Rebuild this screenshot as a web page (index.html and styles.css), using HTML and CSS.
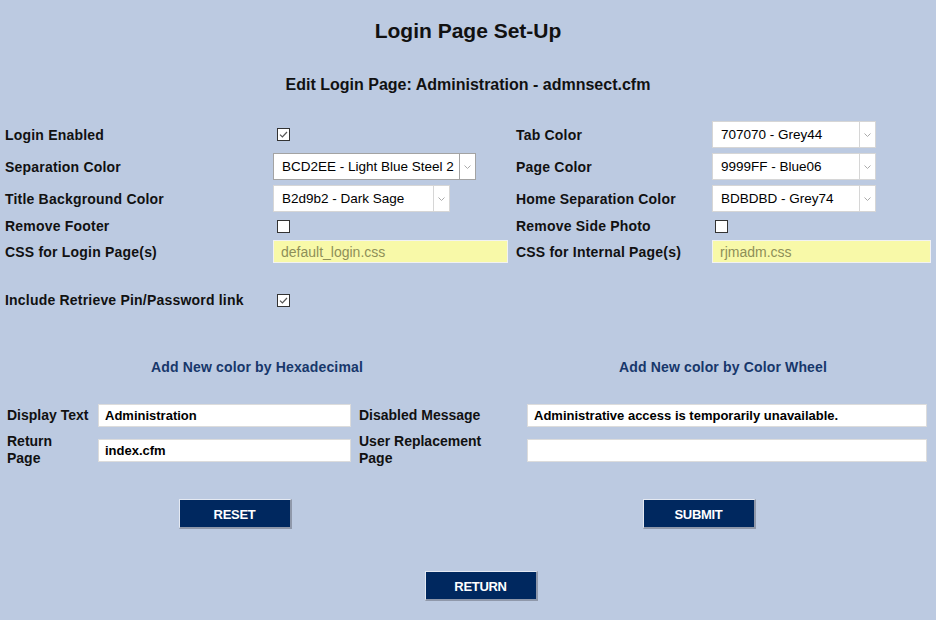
FILE: index.html
```html
<!DOCTYPE html>
<html lang="en">
<head>
<meta charset="utf-8">
<title>Login Page Set-Up</title>
<link rel="stylesheet" href="styles.css">
</head>
<body>
<header class="head">
  <h1 class="title">Login Page Set-Up</h1>
  <h2 class="subtitle">Edit Login Page: Administration - admnsect.cfm</h2>
</header>

<section class="settings">
  <span class="lbl">Login Enabled</span>
  <span class="cb"><svg viewBox="0 0 13 13" width="13" height="13"><rect x="0.5" y="0.5" width="12" height="12" fill="#fff" stroke="#333"/><path d="M3 6.6 L5.4 9 L10 4" fill="none" stroke="#555" stroke-width="1.2"/></svg></span>
  <span class="lbl">Tab Color</span>
  <div class="sel sel-r"><span class="sel-text">707070 - Grey44</span><span class="sel-arrow"><svg viewBox="0 0 7 4" width="7" height="4"><path d="M0.5 0.5 L3.5 3.5 L6.5 0.5" fill="none" stroke="#aaa" stroke-width="1"/></svg></span></div>

  <span class="lbl">Separation Color</span>
  <div class="sel sel-wide sel-focus"><span class="sel-text">BCD2EE - Light Blue Steel 2</span><span class="sel-arrow"><svg viewBox="0 0 7 4" width="7" height="4"><path d="M0.5 0.5 L3.5 3.5 L6.5 0.5" fill="none" stroke="#aaa" stroke-width="1"/></svg></span></div>
  <span class="lbl">Page Color</span>
  <div class="sel sel-r"><span class="sel-text">9999FF - Blue06</span><span class="sel-arrow"><svg viewBox="0 0 7 4" width="7" height="4"><path d="M0.5 0.5 L3.5 3.5 L6.5 0.5" fill="none" stroke="#aaa" stroke-width="1"/></svg></span></div>

  <span class="lbl">Title Background Color</span>
  <div class="sel sel-mid"><span class="sel-text">B2d9b2 - Dark Sage</span><span class="sel-arrow"><svg viewBox="0 0 7 4" width="7" height="4"><path d="M0.5 0.5 L3.5 3.5 L6.5 0.5" fill="none" stroke="#aaa" stroke-width="1"/></svg></span></div>
  <span class="lbl">Home Separation Color</span>
  <div class="sel sel-r"><span class="sel-text">BDBDBD - Grey74</span><span class="sel-arrow"><svg viewBox="0 0 7 4" width="7" height="4"><path d="M0.5 0.5 L3.5 3.5 L6.5 0.5" fill="none" stroke="#aaa" stroke-width="1"/></svg></span></div>

  <span class="lbl">Remove Footer</span>
  <span class="cb"><svg viewBox="0 0 13 13" width="13" height="13"><rect x="0.5" y="0.5" width="12" height="12" fill="#fff" stroke="#333"/></svg></span>
  <span class="lbl">Remove Side Photo</span>
  <span class="cb cb-r"><svg viewBox="0 0 13 13" width="13" height="13"><rect x="0.5" y="0.5" width="12" height="12" fill="#fff" stroke="#333"/></svg></span>

  <span class="lbl">CSS for Login Page(s)</span>
  <input class="css-input" type="text" value="default_login.css" readonly>
  <span class="lbl">CSS for Internal Page(s)</span>
  <input class="css-input css-input-r" type="text" value="rjmadm.css" readonly>

  <span class="lbl r7">Include Retrieve Pin/Password link</span>
  <span class="cb r7"><svg viewBox="0 0 13 13" width="13" height="13"><rect x="0.5" y="0.5" width="12" height="12" fill="#fff" stroke="#333"/><path d="M3 6.6 L5.4 9 L10 4" fill="none" stroke="#555" stroke-width="1.2"/></svg></span>
</section>

<section class="addrow">
  <span class="addlink">Add New color by Hexadecimal</span>
  <span class="addlink">Add New color by Color Wheel</span>
</section>

<section class="form">
  <span class="flbl">Display Text</span>
  <input class="field" type="text" value="Administration">
  <span class="flbl flbl2">Disabled Message</span>
  <input class="field" type="text" value="Administrative access is temporarily unavailable.">

  <span class="flbl">Return<br>Page</span>
  <input class="field" type="text" value="index.cfm">
  <span class="flbl flbl2">User Replacement<br>Page</span>
  <input class="field" type="text" value="">
</section>

<section class="btnrow">
  <button class="btn" type="button">RESET</button>
  <button class="btn" type="button">SUBMIT</button>
</section>

<section class="retrow">
  <button class="btn" type="button">RETURN</button>
</section>
</body>
</html>
```

FILE: styles.css
```css
body {
  margin: 0;
  background: #bccae1;
  font-family: "Liberation Sans", Arial, sans-serif;
  color: #111;
}

.head {
  text-align: center;
  padding-top: 19px;
}

.title {
  margin: 0;
  font-size: 21px;
  line-height: 24px;
  font-weight: bold;
}

.subtitle {
  margin: 32px 0 0;
  font-size: 16px;
  line-height: 20px;
  font-weight: bold;
}

.settings {
  display: grid;
  grid-template-columns: 268px 243px 196px 219px;
  grid-template-rows: 27px 27px 27px 18px 23px 17px 20px;
  row-gap: 5px;
  padding-left: 5px;
  margin-top: 26px;
  align-items: center;
}

.lbl {
  font-size: 14px;
  font-weight: bold;
  letter-spacing: 0.2px;
  white-space: nowrap;
}

.r7 {
  grid-row: 7;
}

.cb {
  display: flex;
  margin-left: 4px;
}

.cb-r {
  margin-left: 3px;
}

.sel {
  display: flex;
  align-items: center;
  height: 27px;
  box-sizing: border-box;
  border: 1px solid #d6d6d6;
  background: #fff;
  font-size: 13.5px;
  color: #000;
}

.sel-r {
  width: 164px;
}

.sel-wide {
  width: 203px;
}

.sel-mid {
  width: 177px;
}

.sel-focus {
  border-color: #a3a3a3;
}

.sel-text {
  flex: 1;
  padding-left: 8px;
  white-space: nowrap;
  overflow: hidden;
}

.sel-arrow {
  width: 15px;
  align-self: stretch;
  border-left: 1px solid #d6d6d6;
  display: flex;
  align-items: center;
  justify-content: center;
}

.sel-focus .sel-arrow {
  border-left-color: #a3a3a3;
}

.css-input {
  width: 235px;
  height: 23px;
  box-sizing: border-box;
  margin: 0;
  border: 1px solid #f2f2f2;
  background: #f8f9a8;
  color: #8e8f58;
  font-family: "Liberation Sans", Arial, sans-serif;
  font-size: 14px;
  padding: 0 0 0 7px;
  outline: none;
}

.css-input-r {
  width: 219px;
}

.addrow {
  display: grid;
  grid-template-columns: 514px 418px;
  margin-top: 48px;
  line-height: 18px;
}

.addlink {
  text-align: center;
  font-size: 14px;
  font-weight: bold;
  letter-spacing: 0.15px;
  color: #17376b;
}

.form {
  display: grid;
  grid-template-columns: 91px 253px 176px 400px;
  row-gap: 6px;
  padding-left: 7px;
  margin-top: 28px;
  align-items: center;
}

.flbl {
  font-size: 14px;
  font-weight: bold;
  line-height: 17px;
  white-space: nowrap;
}

.flbl2 {
  padding-left: 8px;
}

.field {
  width: 100%;
  height: 23px;
  box-sizing: border-box;
  margin: 0;
  border: 1px solid #dcdcdc;
  background: #fff;
  color: #000;
  font-family: "Liberation Sans", Arial, sans-serif;
  font-size: 13px;
  font-weight: bold;
  padding: 0 0 0 6px;
  outline: none;
}

.btnrow {
  display: grid;
  grid-template-columns: 464px 464px;
  padding-left: 3px;
  margin-top: 32px;
  justify-items: center;
}

.retrow {
  display: flex;
  justify-content: center;
  padding-left: 26px;
  margin-top: 42px;
}

.btn {
  width: 113px;
  height: 30px;
  box-sizing: border-box;
  margin: 0;
  padding: 1px 0 0;
  background: #00285f;
  color: #fff;
  font-family: "Liberation Sans", Arial, sans-serif;
  font-size: 13px;
  font-weight: bold;
  letter-spacing: -0.3px;
  border-style: solid;
  border-width: 1px 2px 2px 1px;
  border-color: #e4e9f2 #8f98aa #8f98aa #e4e9f2;
}
```
